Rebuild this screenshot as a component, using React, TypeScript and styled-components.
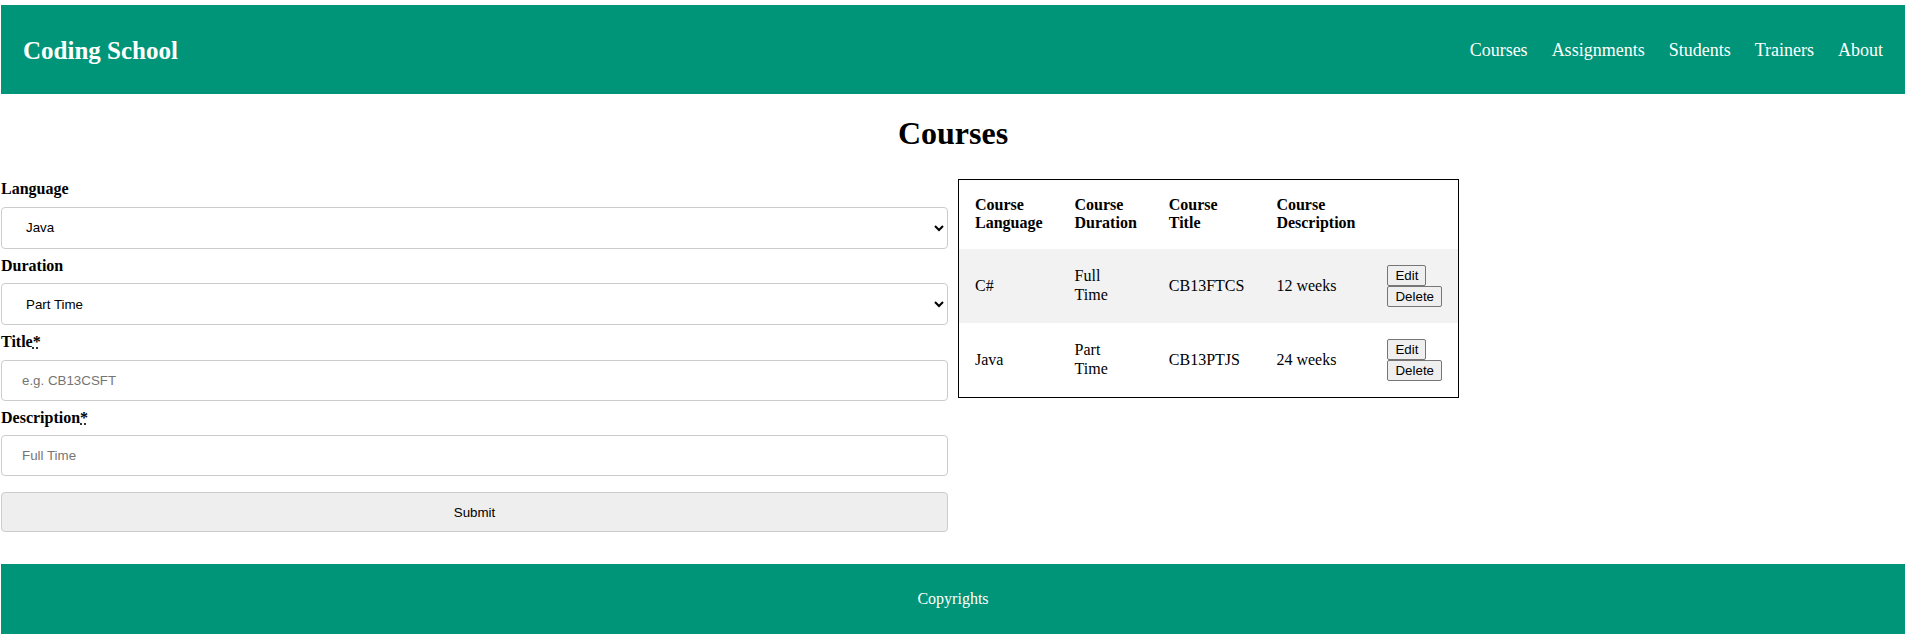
import React from "react";
import styled, { createGlobalStyle } from "styled-components";

const GlobalStyle = createGlobalStyle`
  html, body {
    margin: 0;
    padding: 0;
    background: #ffffff;
  }
  body {
    font-family: "Liberation Serif", "Times New Roman", serif;
    font-size: 16px;
    color: #000000;
  }
  * { box-sizing: border-box; }
`;

const Page = styled.div`
  padding: 5px 8px 0 1px;
  display: flex;
  flex-direction: column;
`;

const Header = styled.header`
  height: 89px;
  background: #009578;
  color: #ffffff;
  display: flex;
  align-items: center;
  justify-content: space-between;
  padding: 0 22px;
`;

const Logo = styled.div`
  font-size: 25px;
  font-weight: bold;
  padding-top: 2px;
`;

const Nav = styled.nav`
  display: flex;
  gap: 24px;
  padding-top: 1px;
`;

const NavLink = styled.a`
  color: #ffffff;
  font-size: 18px;
  text-decoration: none;
`;

const Title = styled.h1`
  margin: 21px 0 0;
  font-size: 32px;
  line-height: 37px;
  font-weight: bold;
  text-align: center;
`;

const Content = styled.main`
  display: flex;
  align-items: flex-start;
  gap: 10px;
  margin-top: 27px;
`;

const Form = styled.form`
  width: calc(50% - 5px);
  display: flex;
  flex-direction: column;
  padding-top: 1px;
`;

const Label = styled.label`
  font-weight: bold;
  font-size: 16px;
  line-height: 18.6px;
`;

const Required = styled.abbr`
  text-decoration: underline dotted;
`;

const Select = styled.select`
  width: 100%;
  height: 42px;
  margin: 8px 0;
  padding: 0 20px;
  border: 1px solid #cccccc;
  border-radius: 4px;
  background: #ffffff;
  color: #000000;
  font-family: "Liberation Sans", Arial, sans-serif;
  font-size: 13.333px;
`;

const Input = styled.input`
  width: 100%;
  height: 41px;
  margin: 8px 0;
  padding: 0 20px;
  border: 1px solid #cccccc;
  border-radius: 4px;
  background: #ffffff;
  font-family: "Liberation Sans", Arial, sans-serif;
  font-size: 13.333px;
  &::placeholder { color: #757575; }
`;

const SubmitButton = styled.button`
  width: 100%;
  height: 40px;
  margin: 8px 0;
  border: 1px solid #cccccc;
  border-radius: 4px;
  background: #eeeeee;
  color: #000000;
  font-family: "Liberation Sans", Arial, sans-serif;
  font-size: 13.333px;
`;

const Table = styled.table`
  width: min-content;
  border-collapse: collapse;
  border: 1px solid #000000;
`;

const Row = styled.tr<{ $shaded?: boolean }>`
  background: ${(p) => (p.$shaded ? "#f2f2f2" : "#ffffff")};
`;

const HeadCell = styled.th`
  padding: 16px;
  text-align: left;
  font-weight: bold;
  line-height: 18.4px;
`;

const Cell = styled.td`
  padding: 16px;
  text-align: left;
  line-height: 18.4px;
`;

const Actions = styled.div`
  display: flex;
  flex-direction: column;
  align-items: flex-start;
`;

const SmallButton = styled.button`
  padding: 2px 7px;
  border: 1px solid #767676;
  border-radius: 2px;
  background: #efefef;
  color: #000000;
  font-family: "Liberation Sans", Arial, sans-serif;
  font-size: 13.333px;
  line-height: 15px;
`;

const Footer = styled.footer`
  margin-top: 24px;
  background: #009578;
  color: #ffffff;
  text-align: center;
  padding: 26px 0 30px;
  font-size: 16px;
  line-height: 18.4px;
`;

const courses = [
  { lang: "C#", dur: "Full Time", title: "CB13FTCS", desc: "12 weeks" },
  { lang: "Java", dur: "Part Time", title: "CB13PTJS", desc: "24 weeks" },
];

export default function App() {
  return (
    <>
      <GlobalStyle />
      <Page>
        <Header>
          <Logo>Coding School</Logo>
          <Nav>
            <NavLink>Courses</NavLink>
            <NavLink>Assignments</NavLink>
            <NavLink>Students</NavLink>
            <NavLink>Trainers</NavLink>
            <NavLink>About</NavLink>
          </Nav>
        </Header>
        <Title>Courses</Title>
        <Content>
          <Form onSubmit={(e) => e.preventDefault()}>
            <Label htmlFor="lang">Language</Label>
            <Select id="lang" defaultValue="Java">
              <option>C#</option>
              <option>Java</option>
            </Select>
            <Label htmlFor="dur">Duration</Label>
            <Select id="dur" defaultValue="Part Time">
              <option>Full Time</option>
              <option>Part Time</option>
            </Select>
            <Label htmlFor="title">
              Title<Required title="required">*</Required>
            </Label>
            <Input id="title" type="text" placeholder="e.g. CB13CSFT" />
            <Label htmlFor="desc">
              Description<Required title="required">*</Required>
            </Label>
            <Input id="desc" type="text" placeholder="Full Time" />
            <SubmitButton type="submit">Submit</SubmitButton>
          </Form>
          <Table>
            <tbody>
              <Row>
                <HeadCell>Course Language</HeadCell>
                <HeadCell>Course Duration</HeadCell>
                <HeadCell>Course Title</HeadCell>
                <HeadCell>Course Description</HeadCell>
                <HeadCell></HeadCell>
              </Row>
              {courses.map((c, i) => (
                <Row key={c.title} $shaded={i % 2 === 0}>
                  <Cell>{c.lang}</Cell>
                  <Cell>{c.dur}</Cell>
                  <Cell>{c.title}</Cell>
                  <Cell>{c.desc}</Cell>
                  <Cell>
                    <Actions>
                      <SmallButton type="button">Edit</SmallButton>
                      <SmallButton type="button">Delete</SmallButton>
                    </Actions>
                  </Cell>
                </Row>
              ))}
            </tbody>
          </Table>
        </Content>
        <Footer>Copyrights</Footer>
      </Page>
    </>
  );
}
